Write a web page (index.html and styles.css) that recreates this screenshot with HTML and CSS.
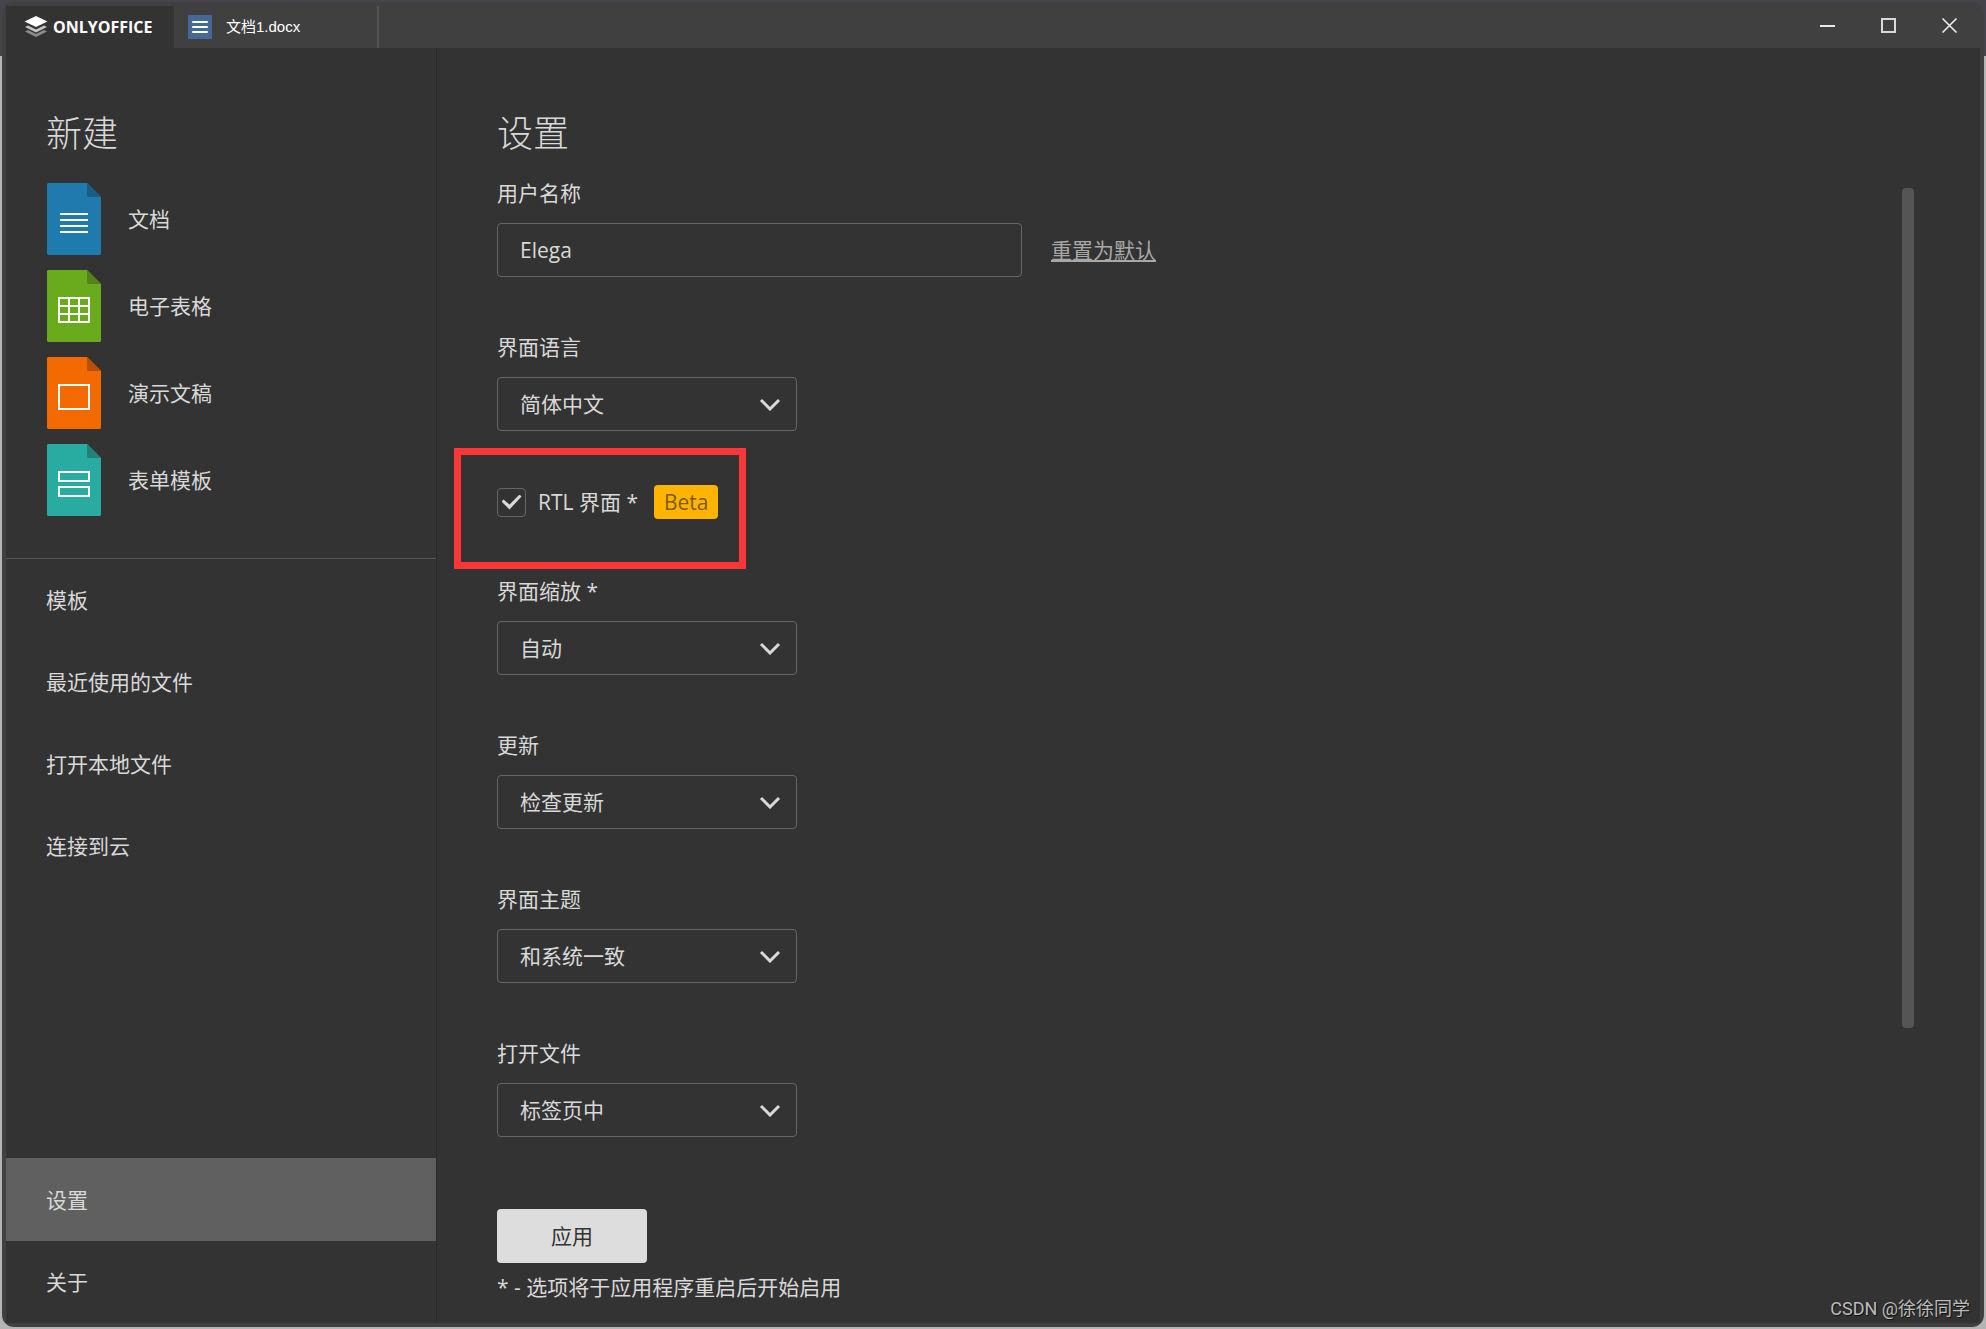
FILE: index.html
```html
<!DOCTYPE html>
<html lang="zh-CN">
<head>
<meta charset="utf-8">
<title>ONLYOFFICE</title>
<link rel="stylesheet" href="styles.css">
</head>
<body>
<div class="window">
  <header class="titlebar">
    <button class="tab tab-home" type="button">
      <svg class="logo" width="24" height="24" viewBox="0 0 24 24" aria-hidden="true">
        <path d="M1 16.500L4 15l8 4 8-4 3 1.500-11 5.500z" fill="#8c8c8c"/>
        <path d="M1 12L4 10.500l8 4 8-4 3 1.500-11 5.500z" fill="#c4c4c4"/>
        <path d="M12 1L23.500 6.500 12 12 0.500 6.500z" fill="#fff"/>
      </svg>
      <span>ONLYOFFICE</span>
    </button>
    <button class="tab tab-doc" type="button">
      <svg width="24" height="24" viewBox="0 0 24 24" aria-hidden="true">
        <rect width="24" height="24" rx="1" fill="#446995"/>
        <path d="M5 7h14M5 12h14M5 17h14" stroke="#fff" stroke-width="2" stroke-linecap="round"/>
      </svg>
      <span>文档1.docx</span>
    </button>
    <div class="controls">
      <button type="button" aria-label="最小化"><svg width="15" height="15" viewBox="0 0 15 15"><path d="M0 8h15" stroke="#e8e8e4" stroke-width="2"/></svg></button>
      <button type="button" aria-label="最大化"><svg width="15" height="15" viewBox="0 0 15 15"><rect x="1" y="1" width="13" height="13" fill="none" stroke="#d8dad6" stroke-width="2"/></svg></button>
      <button type="button" aria-label="关闭"><svg width="15" height="15" viewBox="0 0 15 15"><path d="M.5.5l14 14M14.500.5l-14 14" stroke="#f4f4f0" stroke-width="1.500"/></svg></button>
    </div>
  </header>

  <div class="body">
    <nav class="sidebar">
      <h1 class="title">新建</h1>
      <div class="create">
        <button type="button">
          <svg width="54" height="72" viewBox="0 0 54 72" aria-hidden="true"><path d="M1 0h39l14 14v57l-1 1H1l-1-1V1z" fill="#1f7aae"/><path d="M40 0l14 14H41l-1-1z" fill="#195d85"/><path d="M13 31h28M13 37h28M13 43h28M13 49h28" stroke="#fff" stroke-width="2"/></svg>
          <span>文档</span>
        </button>
        <button type="button">
          <svg width="54" height="72" viewBox="0 0 54 72" aria-hidden="true"><path d="M1 0h39l14 14v57l-1 1H1l-1-1V1z" fill="#6aab1e"/><path d="M40 0l14 14H41l-1-1z" fill="#51831a"/><path d="M12 28h30v24H12zM22 28v24M32 28v24M12 36h30M12 44h30" fill="none" stroke="#fff" stroke-width="2"/></svg>
          <span>电子表格</span>
        </button>
        <button type="button">
          <svg width="54" height="72" viewBox="0 0 54 72" aria-hidden="true"><path d="M1 0h39l14 14v57l-1 1H1l-1-1V1z" fill="#f36a00"/><path d="M40 0l14 14H41l-1-1z" fill="#b84f02"/><path d="M12 28h30v24H12z" fill="none" stroke="#fff" stroke-width="2"/></svg>
          <span>演示文稿</span>
        </button>
        <button type="button">
          <svg width="54" height="72" viewBox="0 0 54 72" aria-hidden="true"><path d="M1 0h39l14 14v57l-1 1H1l-1-1V1z" fill="#28aca2"/><path d="M40 0l14 14H41l-1-1z" fill="#20827b"/><path d="M12 28h30v9H12zM12 43h30v9H12z" fill="none" stroke="#fff" stroke-width="2"/></svg>
          <span>表单模板</span>
        </button>
      </div>
      <div class="menu">
        <a href="#templates">模板</a>
        <a href="#recent">最近使用的文件</a>
        <a href="#open">打开本地文件</a>
        <a href="#cloud">连接到云</a>
      </div>
      <div class="menu menu-bottom">
        <a class="active" href="#settings">设置</a>
        <a href="#about">关于</a>
      </div>
    </nav>

    <main class="main">
      <form class="settings">
        <h1 class="title">设置</h1>
        <div class="field">
          <label for="user">用户名称</label>
          <div class="line">
            <input id="user" class="text" type="text" value="Elega">
            <a class="reset" href="#reset">重置为默认</a>
          </div>
        </div>
        <div class="field">
          <label for="lang">界面语言</label>
          <div class="select">
            <select id="lang"><option>简体中文</option></select>
            <svg width="22" height="14" viewBox="0 0 22 14" aria-hidden="true"><path d="M2 3l9 9 9-9"/></svg>
          </div>
        </div>
        <div class="check">
          <input id="rtl" type="checkbox" checked>
          <label for="rtl">RTL 界面 *</label>
          <span class="badge">Beta</span>
          <div class="highlight"></div>
        </div>
        <div class="field">
          <label for="zoom">界面缩放 *</label>
          <div class="select">
            <select id="zoom"><option>自动</option></select>
            <svg width="22" height="14" viewBox="0 0 22 14" aria-hidden="true"><path d="M2 3l9 9 9-9"/></svg>
          </div>
        </div>
        <div class="field">
          <label for="update">更新</label>
          <div class="select">
            <select id="update"><option>检查更新</option></select>
            <svg width="22" height="14" viewBox="0 0 22 14" aria-hidden="true"><path d="M2 3l9 9 9-9"/></svg>
          </div>
        </div>
        <div class="field">
          <label for="theme">界面主题</label>
          <div class="select">
            <select id="theme"><option>和系统一致</option></select>
            <svg width="22" height="14" viewBox="0 0 22 14" aria-hidden="true"><path d="M2 3l9 9 9-9"/></svg>
          </div>
        </div>
        <div class="field">
          <label for="openin">打开文件</label>
          <div class="select">
            <select id="openin"><option>标签页中</option></select>
            <svg width="22" height="14" viewBox="0 0 22 14" aria-hidden="true"><path d="M2 3l9 9 9-9"/></svg>
          </div>
        </div>
        <button class="apply" type="button">应用</button>
        <p class="note">* - 选项将于应用程序重启后开始启用</p>
      </form>
      <div class="track"><div class="thumb"></div></div>
    </main>
  </div>
</div>
<div class="watermark">CSDN @徐徐同学</div>
</body>
</html>
```
FILE: styles.css
```css
* { box-sizing: border-box; }

body {
  margin: 0;
  min-height: 100vh;
  padding: 2px;
  display: flex;
  position: relative;
  background: linear-gradient(#45444c 0 56px, #b4b4b4 56px);
  color: #d9d9d9;
  font: 21px/28px "Open Sans", "Noto Sans CJK SC", sans-serif;
}

button, input, select {
  font: inherit;
  color: inherit;
}

button {
  border: 0;
  padding: 0;
  background: none;
}

a { color: inherit; text-decoration: none; }

svg { display: block; flex: none; }

.window {
  flex: 1;
  display: flex;
  flex-direction: column;
  border: 4px solid #404040;
  border-radius: 12px;
  background: #404040;
}

.titlebar {
  display: flex;
  height: 42px;
  color: #fff;
}

.tab {
  display: flex;
  align-items: center;
}

.tab-home {
  width: 168px;
  padding-left: 18px;
  gap: 5px;
  background: #333;
  font-size: 16px;
  font-weight: 700;
}

.tab-doc {
  width: 205px;
  padding-left: 14px;
  gap: 14px;
  border-right: 2px solid #555;
  font: 15px/20px "Liberation Sans", "Noto Sans CJK SC", sans-serif;
}

.controls {
  display: flex;
  margin-left: auto;
  padding-bottom: 3px;
}

.controls button {
  width: 61px;
  display: grid;
  place-items: center;
}

.body {
  flex: 1;
  display: flex;
  background: #333;
}

.title {
  margin: 0;
  font-size: 36px;
  line-height: 48px;
  font-weight: 300;
}

.sidebar {
  width: 431px;
  flex: none;
  display: flex;
  flex-direction: column;
  padding-top: 62px;
  border-right: 1px solid #2a2a2a;
}

.sidebar .title { padding-left: 40px; }

.create {
  display: flex;
  flex-direction: column;
  gap: 15px;
  padding: 25px 0 42px 41px;
  border-bottom: 1px solid #555;
}

.create button {
  display: flex;
  align-items: center;
  gap: 27px;
}

.menu a {
  display: flex;
  align-items: center;
  height: 82px;
  padding-left: 40px;
}

.menu-bottom { margin-top: auto; }

.menu .active {
  height: 83px;
  background: #606060;
}

.main {
  flex: 1;
  display: flex;
  padding: 62px 66px 0 60px;
}

.settings {
  flex: 1;
  display: flex;
  flex-direction: column;
  align-items: flex-start;
}

.field {
  display: flex;
  flex-direction: column;
  gap: 16px;
  margin-top: 56px;
}

.title + .field { margin-top: 21px; }

.line {
  display: flex;
  align-items: center;
  gap: 29px;
}

.text, select {
  height: 54px;
  padding: 0 22px;
  border: 1px solid #666;
  border-radius: 4px;
  background: #333;
  outline: 0;
}

.text { width: 525px; }

.reset {
  color: #a8a8a8;
  text-decoration: underline;
}

.select {
  display: grid;
  width: 300px;
  align-items: center;
}

select {
  grid-area: 1 / 1;
  appearance: none;
}

.select svg {
  grid-area: 1 / 1;
  justify-self: end;
  margin-right: 16px;
  pointer-events: none;
  fill: none;
  stroke: #d9d9d9;
  stroke-width: 3;
}

.check {
  display: flex;
  align-items: center;
  position: relative;
  height: 34px;
  margin-top: 54px;
  margin-bottom: 58px;
}

.check + .field { margin-top: 0; }

.check input {
  appearance: none;
  width: 29px;
  height: 29px;
  margin: 0 12px 0 0;
  border: 1px solid #666;
  border-radius: 4px;
  display: grid;
  place-items: center;
}

.check input:checked::before {
  content: "";
  width: 20px;
  height: 15px;
  background: #d9d9d9;
  clip-path: polygon(0 7px, 2px 5px, 8px 10px, 18px 0, 20px 2px, 8px 15px);
}

.badge {
  height: 34px;
  margin-left: 16px;
  padding: 0 10px;
  border-radius: 4px;
  background: #ffb400;
  color: #815a00;
  line-height: 34px;
}

.highlight {
  position: absolute;
  left: -43px;
  top: -37px;
  width: 292px;
  height: 121px;
  border: 7px solid #fd3737;
  pointer-events: none;
}

.apply {
  width: 150px;
  height: 54px;
  margin-top: 72px;
  border-radius: 4px;
  background: #ddd;
  color: #333;
}

.note { margin: 10px 0 0; }

.track {
  width: 12px;
  margin-top: 78px;
}

.thumb {
  height: 74%;
  border-radius: 4px;
  background: #555;
}

.watermark {
  position: absolute;
  right: 16px;
  bottom: 8px;
  color: #bbb;
  font: 18px/24px Roboto, "Noto Sans CJK SC", sans-serif;
  text-shadow: 1px 1px 1px #111;
}
```
